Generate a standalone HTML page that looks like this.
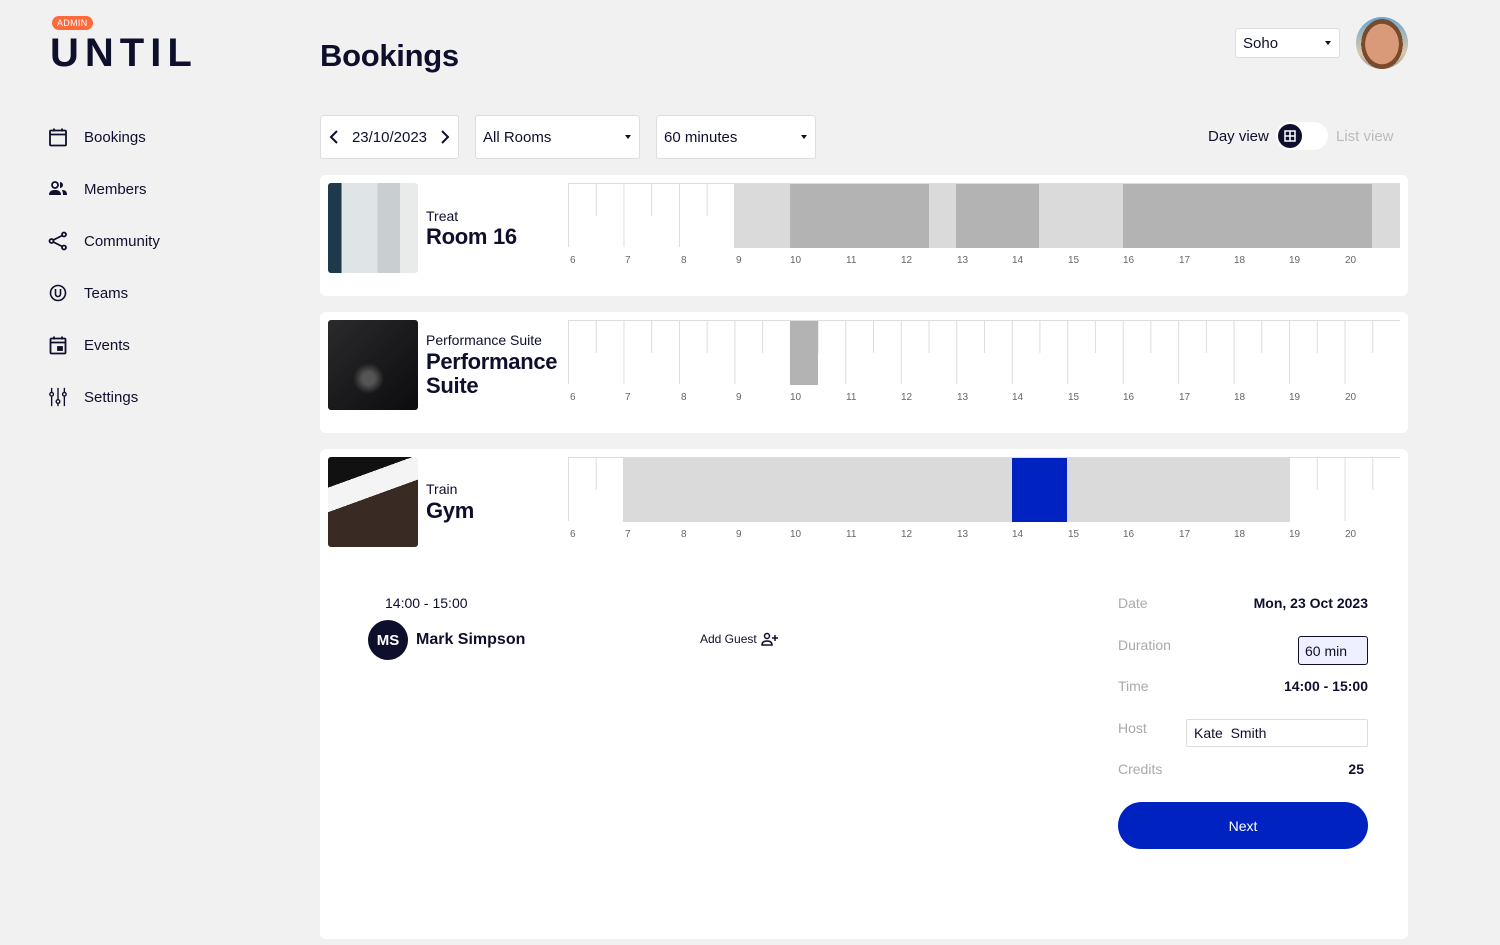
<!DOCTYPE html>
<html><head><meta charset="utf-8"><style>
*{box-sizing:border-box;margin:0;padding:0}
body{width:1500px;height:945px;background:#f1f1f1;font-family:"Liberation Sans",sans-serif;color:#0e0f2c;position:relative;overflow:hidden}
.a{position:absolute}
.nav{left:48px;font-size:15px;display:flex;align-items:center}
.nav svg{width:20px;height:20px;margin-right:16px}
.card{position:absolute;left:320px;width:1088px;background:#fff;border-radius:6px}
.img{position:absolute;left:8px;top:8px;width:90px;height:90px;border-radius:3px}
.tl{position:absolute;left:248px;top:8px;width:832px;height:64px;border-top:1px solid #ddd;
background:
 linear-gradient(90deg,#ddd 1px,transparent 1px) 0 0/55.47px 64px repeat-x,
 linear-gradient(90deg,#ddd 1px,transparent 1px) 27.7px 0/55.47px 32px repeat-x;}
.b{position:absolute;top:0;height:64px}
.l{background:#dadada}.d{background:#b3b3b3}
.lab{position:absolute;top:80px;left:248px;width:900px;font-size:10px;color:#666}
.lab span{position:absolute}
.sub{position:absolute;left:106px;font-size:14px}
.ttl{position:absolute;left:106px;font-size:22px;font-weight:bold;line-height:24px;letter-spacing:-.3px}
.sel{position:absolute;background:#fff;border:1px solid #ddd;border-radius:3px;font-size:14px;padding-left:7px;display:flex;align-items:center}
.sel:after{content:"";position:absolute;right:8px;top:50%;margin-top:-2px;border:3px solid transparent;border-top:4px solid #111}
.k{position:absolute;left:1118px;font-size:14px;color:#aaa}
.v{position:absolute;right:132px;font-size:14px;font-weight:bold;text-align:right}
</style></head><body>
<div class="a" style="left:52px;top:16px;background:#ff6a3d;color:#fff;font-size:9px;border-radius:7px;padding:2px 5px;letter-spacing:.3px">ADMIN</div>
<div class="a" style="left:50px;top:31px;font-size:40px;font-weight:bold;letter-spacing:6px;color:#0e0f2c">UNTIL</div>

<div class="a nav" style="top:127px"><svg viewBox="0 0 20 20" fill="none" stroke="#0e0f2c" stroke-width="1.8"><rect x="2" y="3.5" width="16" height="15" rx="1"/><path d="M2 7.5h16M6 1.5v3M14 1.5v3"/></svg>Bookings</div>
<div class="a nav" style="top:179px"><svg viewBox="0 0 20 20" fill="#0e0f2c"><circle cx="7" cy="6" r="3" fill="none" stroke="#0e0f2c" stroke-width="1.8"/><path d="M1 16c0-4 3-5 6-5s6 1 6 5z"/><path d="M12 3a3 3 0 010 6zM14 11c3 0 5 1 5 5h-4c0-2-.5-4-1-5z"/></svg>Members</div>
<div class="a nav" style="top:231px"><svg viewBox="0 0 20 20" fill="none" stroke="#0e0f2c" stroke-width="1.8"><circle cx="16" cy="3.5" r="2"/><circle cx="3.5" cy="10" r="2"/><circle cx="16" cy="16.5" r="2"/><path d="M5.3 9l9-4.5M5.3 11l9 4.5"/></svg>Community</div>
<div class="a nav" style="top:283px"><svg viewBox="0 0 20 20" fill="none" stroke="#0e0f2c" stroke-width="1.6"><circle cx="10" cy="10" r="7.5"/><path d="M7.5 6v5a2.5 2.5 0 005 0V6"/></svg>Teams</div>
<div class="a nav" style="top:335px"><svg viewBox="0 0 20 20" fill="none" stroke="#0e0f2c" stroke-width="1.8"><rect x="2.5" y="3.5" width="15" height="15" rx="1"/><path d="M2.5 7.5h15M6 1.5v3M14 1.5v3"/><rect x="10" y="12" width="4" height="3" fill="#0e0f2c"/></svg>Events</div>
<div class="a nav" style="top:387px"><svg viewBox="0 0 20 22" fill="none" stroke="#0e0f2c" stroke-width="1.5"><path d="M3 1v5M3 10v11M10 1v13M10 18v3M17 1v5M17 10v11"/><circle cx="3" cy="8" r="2"/><circle cx="10" cy="16" r="2"/><circle cx="17" cy="8" r="2"/></svg>Settings</div>

<div class="a" style="left:320px;top:38px;font-size:31px;font-weight:bold;letter-spacing:-.3px">Bookings</div>

<div class="sel" style="left:1235px;top:28px;width:105px;height:30px;font-size:15px">Soho</div>
<div class="a" style="left:1356px;top:17px;width:52px;height:52px;border-radius:50%;background:radial-gradient(ellipse 40% 48% at 50% 52%,#d99a7a 0 80%,#7a4a2a 82% 100%,transparent 100%),linear-gradient(#6aa8d0,#d9c8a8 70%,#999);"></div>

<div class="a" style="left:320px;top:115px;width:139px;height:44px;background:#fff;border:1px solid #ddd;border-radius:3px;font-size:15px;display:flex;align-items:center;justify-content:space-between;padding:0 8px">
<svg width="10" height="14" viewBox="0 0 10 14"><path d="M8 1L2 7l6 6" stroke="#0e0f2c" stroke-width="2" fill="none"/></svg>23/10/2023<svg width="10" height="14" viewBox="0 0 10 14"><path d="M2 1l6 6-6 6" stroke="#0e0f2c" stroke-width="2" fill="none"/></svg></div>
<div class="sel" style="left:475px;top:115px;width:165px;height:44px;font-size:15px">All Rooms</div>
<div class="sel" style="left:656px;top:115px;width:160px;height:44px;font-size:15px">60 minutes</div>

<div class="a" style="left:1208px;top:128px;font-size:15px">Day view</div>
<div class="a" style="left:1276px;top:122px;width:52px;height:28px;border-radius:14px;background:#fff"></div>
<div class="a" style="left:1278px;top:124px;width:24px;height:24px;border-radius:50%;background:#0e0f2c"><svg width="24" height="24" viewBox="0 0 24 24"><rect x="7" y="7" width="10" height="10" fill="none" stroke="#fff" stroke-width="1.5"/><path d="M12 7v10M7 12h10" stroke="#fff" stroke-width="1.5"/></svg></div>
<div class="a" style="left:1336px;top:128px;font-size:15px;color:#bbb">List view</div>

<div class="card" style="top:175px;height:121px">
<div class="img" style="background:linear-gradient(90deg,#1e3a4a 0 15%,#dfe4e6 15% 55%,#c9ced0 55% 80%,#e9eaea 80%),#ccc"></div>
<div class="sub" style="top:33px">Treat</div><div class="ttl" style="top:50px">Room 16</div>
<div class="tl"><div class="b l" style="left:166px;width:56px"></div><div class="b d" style="left:222px;width:139px"></div><div class="b l" style="left:361px;width:27px"></div><div class="b d" style="left:388px;width:83px"></div><div class="b l" style="left:471px;width:84px"></div><div class="b d" style="left:555px;width:249px"></div><div class="b l" style="left:804px;width:28px"></div></div>
<div class="lab"><span style="left:2px">6</span><span style="left:57px">7</span><span style="left:113px">8</span><span style="left:168px">9</span><span style="left:222px">10</span><span style="left:278px">11</span><span style="left:333px">12</span><span style="left:389px">13</span><span style="left:444px">14</span><span style="left:500px">15</span><span style="left:555px">16</span><span style="left:611px">17</span><span style="left:666px">18</span><span style="left:721px">19</span><span style="left:777px">20</span></div>
</div>
<div class="card" style="top:312px;height:121px">
<div class="img" style="background:radial-gradient(circle at 45% 65%,#555 0 8%,transparent 20%),linear-gradient(135deg,#2a2a2c,#0c0c0e)"></div>
<div class="sub" style="top:20px">Performance Suite</div><div class="ttl" style="top:38px">Performance<br>Suite</div>
<div class="tl"><div class="b d" style="left:222px;width:28px"></div></div>
<div class="lab"><span style="left:2px">6</span><span style="left:57px">7</span><span style="left:113px">8</span><span style="left:168px">9</span><span style="left:222px">10</span><span style="left:278px">11</span><span style="left:333px">12</span><span style="left:389px">13</span><span style="left:444px">14</span><span style="left:500px">15</span><span style="left:555px">16</span><span style="left:611px">17</span><span style="left:666px">18</span><span style="left:721px">19</span><span style="left:777px">20</span></div>
</div>
<div class="card" style="top:449px;height:490px">
<div class="img" style="background:linear-gradient(160deg,#111 0 25%,#f4f4f4 25% 45%,#3a2a24 45%)"></div>
<div class="sub" style="top:32px">Train</div><div class="ttl" style="top:50px">Gym</div>
<div class="tl"><div class="b l" style="left:55px;width:389px"></div><div class="b" style="left:444px;width:55px;background:#0022c0"></div><div class="b l" style="left:499px;width:223px"></div></div>
<div class="lab"><span style="left:2px">6</span><span style="left:57px">7</span><span style="left:113px">8</span><span style="left:168px">9</span><span style="left:222px">10</span><span style="left:278px">11</span><span style="left:333px">12</span><span style="left:389px">13</span><span style="left:444px">14</span><span style="left:500px">15</span><span style="left:555px">16</span><span style="left:611px">17</span><span style="left:666px">18</span><span style="left:721px">19</span><span style="left:777px">20</span></div>
</div>

<div class="a" style="left:385px;top:595px;font-size:14px">14:00 - 15:00</div>
<div class="a" style="left:368px;top:620px;width:40px;height:40px;border-radius:50%;background:#0e0f2c;color:#fff;font-weight:bold;font-size:15px;display:flex;align-items:center;justify-content:center">MS</div>
<div class="a" style="left:416px;top:631px;font-size:16px;font-weight:bold">Mark Simpson</div>
<div class="a" style="left:700px;top:632px;font-size:12px;display:flex;align-items:center">Add Guest <svg width="18" height="14" viewBox="0 0 18 14" style="margin-left:4px" fill="none" stroke="#0e0f2c" stroke-width="1.5"><circle cx="6" cy="4" r="2.5"/><path d="M1 13c0-3 2-4 5-4s5 1 5 4zM14 3v6M11 6h6"/></svg></div>

<div class="k" style="top:595px">Date</div><div class="v" style="top:595px">Mon, 23 Oct 2023</div>
<div class="k" style="top:637px">Duration</div>
<div class="a" style="left:1298px;top:636px;width:70px;height:29px;border:1px solid #0e0f2c;border-radius:3px;background:#eef0ff;font-size:14px;padding:6px 0 0 6px">60 min</div>
<div class="k" style="top:678px">Time</div><div class="v" style="top:678px">14:00 - 15:00</div>
<div class="k" style="top:720px">Host</div>
<div class="a" style="left:1186px;top:719px;width:182px;height:28px;border:1px solid #ddd;border-radius:2px;background:#fff;font-size:14px;padding:5px 0 0 7px">Kate&nbsp; Smith</div>
<div class="k" style="top:761px">Credits</div><div class="v" style="top:761px;right:136px">25</div>
<div class="a" style="left:1118px;top:802px;width:250px;height:47px;border-radius:24px;background:#0022c0;color:#fff;font-size:14px;display:flex;align-items:center;justify-content:center">Next</div>
</body></html>
